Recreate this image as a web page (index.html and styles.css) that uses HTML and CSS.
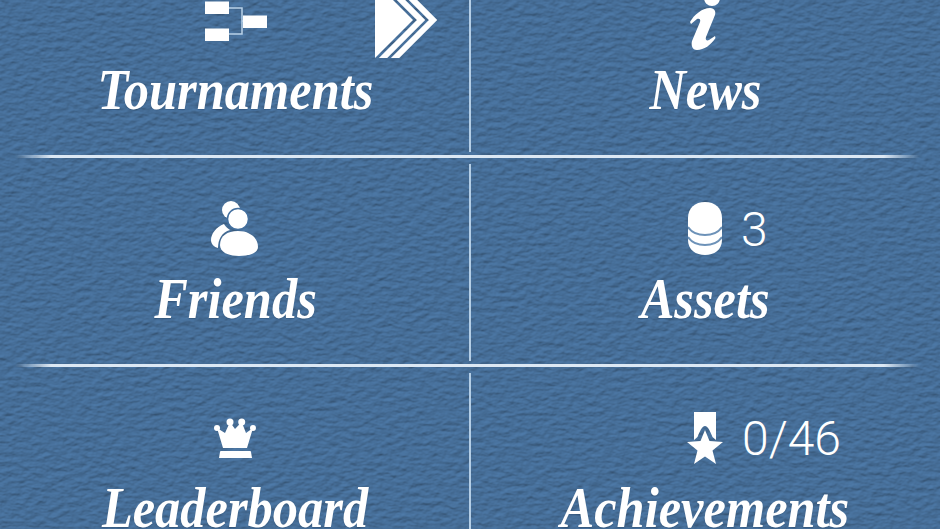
FILE: index.html
```html
<!DOCTYPE html>
<html lang="en">
<head>
<meta charset="utf-8">
<title>Menu</title>
<link rel="stylesheet" href="styles.css">
</head>
<body>
<svg class="texture" width="940" height="529" aria-hidden="true">
  <filter id="paper" x="0" y="0" width="100%" height="100%" color-interpolation-filters="sRGB">
    <feTurbulence type="fractalNoise" baseFrequency="0.11 0.2" numOctaves="3" seed="7" result="n"/>
    <feDiffuseLighting in="n" surfaceScale="0.800" diffuseConstant="1.1" lighting-color="#48719c">
      <feDistantLight azimuth="250" elevation="62"/>
    </feDiffuseLighting>
    <feGaussianBlur stdDeviation="0.5"/>
  </filter>
  <rect width="940" height="529" filter="url(#paper)"/>
</svg>
<main class="menu">
  <section class="row">
    <a class="cell cell-left">
      <span class="icon icon-bracket">
        <svg width="62" height="41" viewBox="0 0 62 41">
          <path class="wire" d="M24 8h13v26H24M37 21h6"/>
          <path class="solid" d="M0 1.500h24v12.500H0zM0 28.500h24v12.500H0zM38 15.500h24v12.500H38z"/>
        </svg>
      </span>
      <svg class="chevrons" width="64" height="76" viewBox="0 0 64 76">
        <path class="solid" d="M0 0L38 38L0 76z"/>
        <path class="chev" d="M6 -2L46 38L6 78M18 -2L58 38L18 78"/>
      </svg>
      <span class="label">Tournaments</span>
    </a>
    <a class="cell">
      <span class="icon">
        <svg width="30" height="66" viewBox="0 0 30 66">
          <circle class="solid" cx="22" cy="11" r="8"/>
          <path class="solid" d="M0 35C4 28 12 21 20 21C25 21 26 25 25 28L16 50C15 53 17 54 19 53L25 49L25.500 51C21 58 14 63 7 63C2 63 1 58 2 54L10 35C11 32 9 31 7 32L1 37z"/>
        </svg>
      </span>
      <span class="label">News</span>
    </a>
  </section>
  <div class="rule"></div>
  <section class="row">
    <a class="cell cell-left">
      <span class="icon">
        <svg width="48" height="56" viewBox="0 0 48 56">
          <circle class="solid" cx="20" cy="9" r="9"/>
          <circle class="solid outlined" cx="27" cy="18" r="10.500"/>
          <path class="solid" d="M13 23C5 26 0 33 0 39C0 43 3 46 7 47C7 38 11 31 19 29C16 27 14 25 13 23z"/>
          <path class="solid" d="M9 44C9 35 16 30 27 30C39 30 47 37 47 46C47 52 38 55 28 55C17 55 9 51 9 44z"/>
        </svg>
      </span>
      <span class="label">Friends</span>
    </a>
    <a class="cell">
      <span class="icon">
        <svg width="34" height="54" viewBox="0 0 34 54">
          <path class="solid" d="M0 16C0 6 7 0 17 0C27 0 34 6 34 16V38C34 48 26 53 17 53C8 53 0 48 0 38z"/>
          <path class="seam" d="M0 25C4 31 10 33 17 33C24 33 30 31 34 25M0 35C4 41 10 43 17 43C24 43 30 41 34 35"/>
        </svg>
        <span class="count">3</span>
      </span>
      <span class="label">Assets</span>
    </a>
  </section>
  <div class="rule"></div>
  <section class="row">
    <a class="cell cell-left">
      <span class="icon">
        <svg width="42" height="40" viewBox="0 0 42 40">
          <circle class="solid" cx="3" cy="10" r="3"/>
          <circle class="solid" cx="16" cy="4" r="3.500"/>
          <circle class="solid" cx="27.700" cy="4" r="3.500"/>
          <circle class="solid" cx="39" cy="10" r="3"/>
          <path class="solid" d="M3 10L11 15L16 4L21 11L27.700 4L32 15L39 10L33 30H9z"/>
          <path class="solid" d="M7 33H36Q37 33 37 34L38 40H5L6 34Q6 33 7 33z"/>
        </svg>
      </span>
      <span class="label">Leaderboard</span>
    </a>
    <a class="cell">
      <span class="icon">
        <svg width="36" height="52" viewBox="0 0 36 52">
          <path class="solid" d="M7 0H29V28L25.500 25C23 19 21 14 18 14C15 14 13 19 10.500 25L7 28z"/>
          <path class="solid" d="M18 18L22.500 29L36 30L25.500 38.500L29 52L18 44.500L7 52L10.500 38.500L0 30L13.500 29z"/>
        </svg>
        <span class="count">0/46</span>
      </span>
      <span class="label">Achievements</span>
    </a>
  </section>
</main>
</body>
</html>
```
FILE: styles.css
```css
html {
  height: 100%;
  overflow: hidden;
  background: #44709f;
}

body {
  margin: 0;
  height: 100%;
  overflow: hidden;
}

.texture {
  position: absolute;
  top: 0;
  left: 0;
  z-index: -1;
}

.menu {
  margin-top: -51px;
}

.row {
  display: grid;
  grid-template-columns: 470px 470px;
  height: 206px;
}

.cell {
  position: relative;
  display: flex;
  flex-direction: column;
  align-items: center;
  padding-top: 38px;
  color: #fff;
}

.cell-left::after {
  content: "";
  position: absolute;
  top: 6px;
  bottom: 3px;
  right: -1px;
  width: 2px;
  background: #b4cee6;
}

.icon {
  position: relative;
  display: flex;
  align-items: center;
  justify-content: center;
  height: 66px;
}

.icon-bracket {
  padding-left: 2px;
}

.solid {
  fill: #fff;
}

.outlined {
  stroke: #44709f;
  stroke-width: 1.500;
}

.seam {
  fill: none;
  stroke: #6d92b8;
  stroke-width: 2;
}

.wire {
  fill: none;
  stroke: #b9d2e9;
  stroke-width: 1.500;
}

.chev {
  fill: none;
  stroke: #fff;
  stroke-width: 6;
}

.chevrons {
  position: absolute;
  top: 33px;
  left: 375px;
}

.count {
  position: absolute;
  left: calc(100% + 19px);
  top: 50%;
  transform: translateY(-48%);
  font: 300 48px/1 Roboto, "Liberation Sans", sans-serif;
  white-space: nowrap;
}

.label {
  margin-top: 7px;
  font: italic 700 58px/60px "Liberation Serif", serif;
  text-shadow: 0 1px 1px rgba(30, 60, 95, .35);
  white-space: nowrap;
  transform: scaleX(.87);
}

.rule {
  height: 3px;
  margin: 0 20px 0 15px;
  background: linear-gradient(90deg, rgba(220, 232, 244, 0), #dce8f4 4%, #dce8f4 96%, rgba(220, 232, 244, 0));
}
```
